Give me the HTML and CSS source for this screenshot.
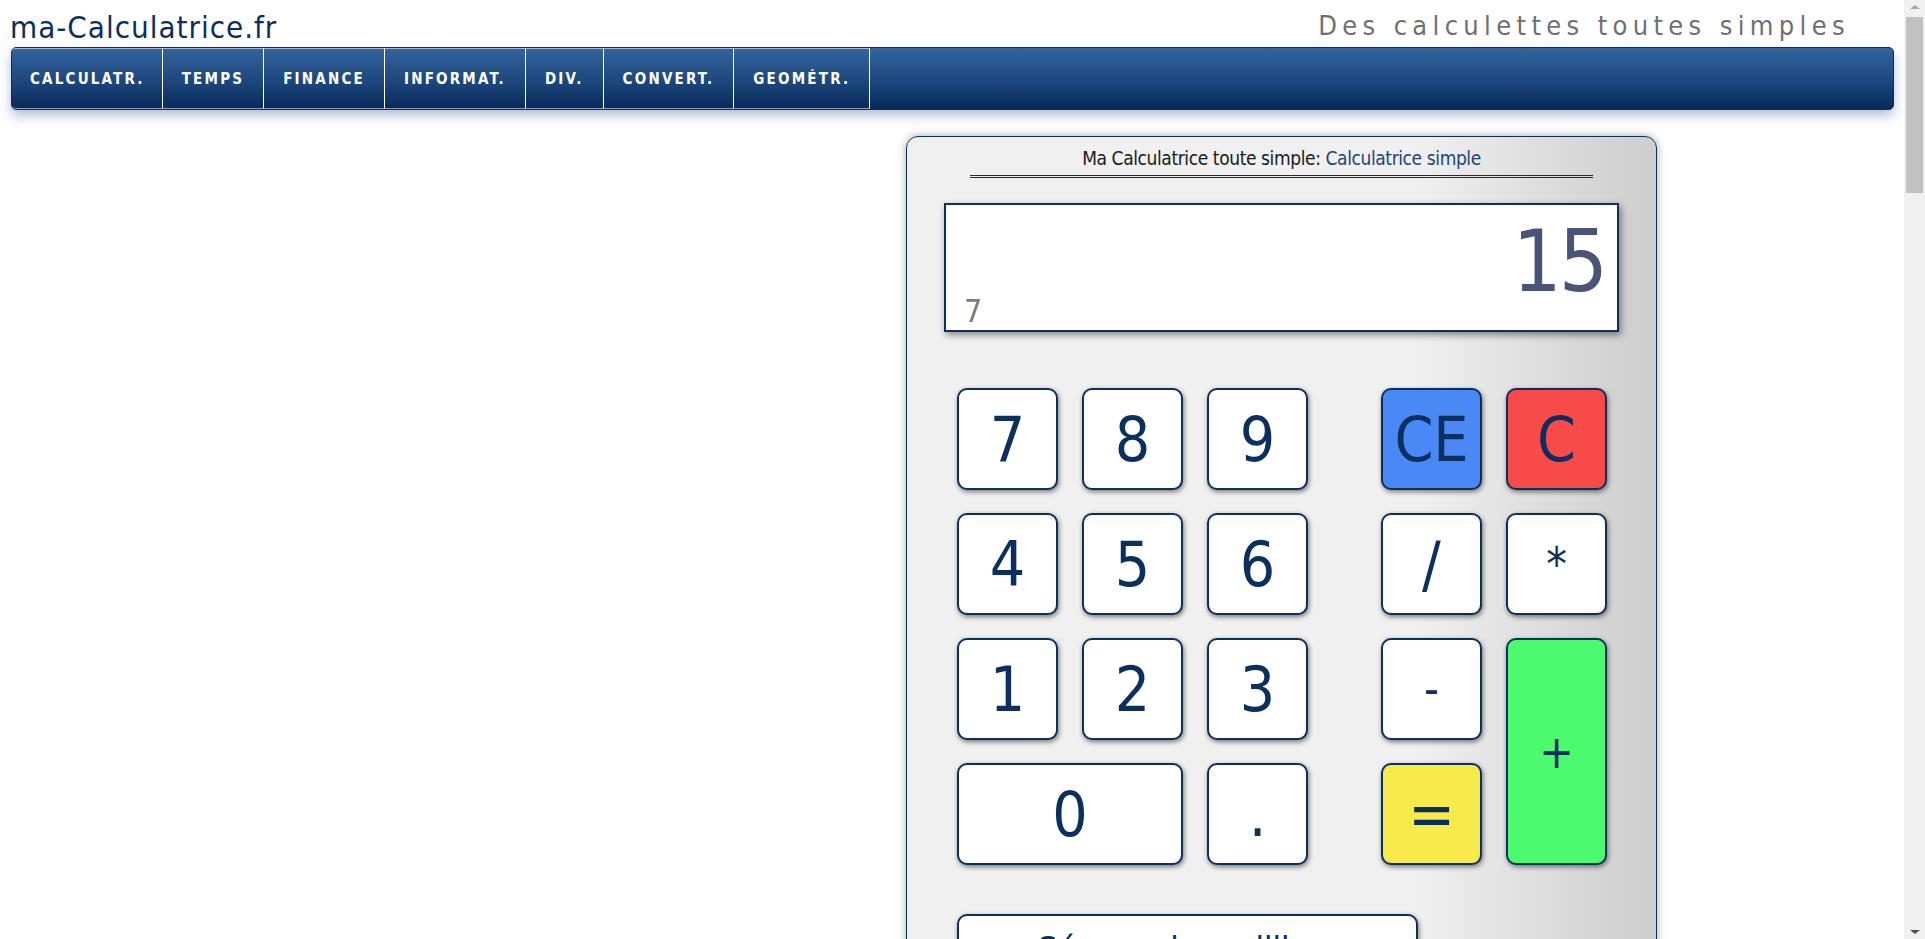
FILE: index.html
```html
<!DOCTYPE html>
<html lang="fr">
<head>
<meta charset="utf-8">
<title>ma-Calculatrice.fr</title>
<link rel="stylesheet" href="styles.css">
</head>
<body>
<div class="page">
  <header class="top">
    <a class="logo" href="#">ma-Calculatrice.fr</a>
    <div class="tagline">Des calculettes toutes simples</div>
  </header>
  <nav class="menu">
    <ul class="menu-list">
      <li class="menu-item">CALCULATR.</li>
      <li class="menu-item">TEMPS</li>
      <li class="menu-item">FINANCE</li>
      <li class="menu-item">INFORMAT.</li>
      <li class="menu-item">DIV.</li>
      <li class="menu-item">CONVERT.</li>
      <li class="menu-item">GEOMÉTR.</li>
    </ul>
  </nav>
  <main class="main">
    <aside class="side"></aside>
    <section class="calc">
      <h1 class="calc-title">Ma Calculatrice toute simple: <span class="calc-sub">Calculatrice simple</span></h1>
      <div class="display">
        <div class="result">15</div>
        <div class="memo">7</div>
      </div>
      <div class="pad">
        <div class="nums">
          <button class="key">7</button>
          <button class="key">8</button>
          <button class="key">9</button>
          <button class="key">4</button>
          <button class="key">5</button>
          <button class="key">6</button>
          <button class="key">1</button>
          <button class="key">2</button>
          <button class="key">3</button>
          <button class="key key-zero">0</button>
          <button class="key">.</button>
        </div>
        <div class="ops">
          <button class="key key-ce">CE</button>
          <button class="key key-c">C</button>
          <button class="key">/</button>
          <button class="key key-op">*</button>
          <button class="key key-op">-</button>
          <button class="key key-op key-plus">+</button>
          <button class="key key-eq">=</button>
        </div>
      </div>
      <button class="key key-wide">Séparer les milliers</button>
    </section>
  </main>
</div>
<div class="scrollbar" aria-hidden="true">
  <span class="sb-up"></span>
  <span class="sb-thumb"></span>
  <span class="sb-down"></span>
</div>
</body>
</html>
```
FILE: styles.css
```css
html, body {
  margin: 0;
  padding: 0;
  background: #ffffff;
}
body {
  font-family: "Liberation Sans Narrow", "DejaVu Sans Condensed", "Liberation Sans", sans-serif;
  font-stretch: condensed;
  color: #0b2f5e;
}
.page {
  margin-right: 21px;
  padding: 0 10px 0 11px;
  min-height: 4800px;
}

/* scrollbar lookalike at the right edge of the window */
.scrollbar {
  position: fixed;
  top: 0;
  right: 0;
  width: 21px;
  height: 100vh;
  background: #f0f0f0;
}
.sb-up, .sb-down {
  position: absolute;
  left: 6px;
  width: 0;
  height: 0;
  border-left: 5px solid transparent;
  border-right: 5px solid transparent;
}
.sb-up {
  top: 5px;
  border-bottom: 4px solid #a8a8a8;
}
.sb-down {
  bottom: 5px;
  border-top: 4px solid #505050;
}
.sb-thumb {
  position: absolute;
  top: 17px;
  left: 2px;
  right: 2px;
  height: 176px;
  background: #c1c1c1;
}

.top {
  display: flex;
  justify-content: space-between;
  align-items: flex-end;
  height: 47px;
}
.logo {
  font-size: 31px;
  line-height: 34px;
  color: #0b2f5e;
  text-decoration: none;
  letter-spacing: 1px;
  margin-left: -1px;
  padding-bottom: 3px;
}
.tagline {
  font-size: 27px;
  line-height: 34px;
  color: #6f6f6f;
  letter-spacing: 5.35px;
  margin-right: 44px;
  padding-bottom: 4px;
}
.menu {
  height: 61px;
  border: 1px solid #1e2a38;
  border-radius: 5px;
  background: linear-gradient(to bottom, #34649d 0%, #1f4a80 50%, #072a5a 100%);
  box-shadow: 0 6px 12px rgba(40, 70, 150, 0.35);
}
.menu-list {
  display: flex;
  height: 100%;
  margin: 0;
  padding: 0;
  list-style: none;
}
.menu-item {
  display: flex;
  align-items: center;
  padding: 0 19px;
  border-right: 1px solid #ffffff;
  border-top: 1px solid rgba(255,255,255,0.55);
  border-bottom: 1px solid rgba(255,255,255,0.55);
  color: #ffffff;
  font-weight: bold;
  font-size: 15px;
  letter-spacing: 2.2px;
}
.menu-item:first-child {
  padding: 0 17px 0 18px;
  border-top-left-radius: 4px;
  border-bottom-left-radius: 4px;
}
.main {
  display: flex;
  padding-top: 26px;
}
.side {
  flex: 0 0 895px;
}
.calc {
  width: 749px;
  height: 900px;
  border: 1px solid #0a3060;
  border-radius: 12px;
  background: linear-gradient(to right, #f0f0f0 0%, #f0f0f0 68%, #cdcdcd 100%);
  box-shadow: 0 0 8px rgba(0, 0, 0, 0.35);
}
.calc-title {
  margin: 8px 63px 0;
  padding-bottom: 4px;
  border-bottom: 3px double #0a3060;
  text-align: center;
  font-weight: normal;
  font-size: 19px;
  line-height: 26px;
  letter-spacing: -0.4px;
  color: #1a1a1a;
}
.calc-sub {
  color: #1c4478;
}
.display {
  position: relative;
  height: 125px;
  margin: 25px 37px 0;
  border: 2px solid #0a3060;
  background: #ffffff;
  box-shadow: 2px 3px 7px rgba(0, 0, 0, 0.45);
}
.result {
  text-align: right;
  padding-right: 12px;
  font-size: 86px;
  line-height: 86px;
  margin-top: 13px;
  letter-spacing: -3px;
  color: #4a5478;
}
.memo {
  position: absolute;
  left: 18px;
  bottom: 2px;
  font-size: 32px;
  line-height: 34px;
  color: #7c7c7c;
}
.pad {
  display: flex;
  gap: 73px;
  margin: 56px 0 0 50px;
}
.nums, .ops {
  display: grid;
  grid-auto-rows: 102px;
  gap: 23px 24px;
}
.nums {
  grid-template-columns: repeat(3, 101px);
}
.ops {
  grid-template-columns: repeat(2, 101px);
}
.key {
  margin: 0;
  padding: 0;
  border: 2px solid #0a3060;
  border-radius: 10px;
  background: #ffffff;
  box-shadow: 1px 2px 5px rgba(0, 0, 0, 0.5);
  font-family: inherit;
  font-stretch: condensed;
  font-size: 62px;
  color: #0b2f5e;
  cursor: pointer;
}
.key-op {
  font-size: 46px;
}
.key-zero {
  grid-column: span 2;
}
.key-ce {
  background: #4a89f5;
}
.key-c {
  background: #f94a4a;
}
.key-plus {
  grid-row: span 2;
  background: #4cfa70;
}
.key-eq {
  background: #f8ea4a;
}
.key-wide {
  display: block;
  width: 461px;
  height: 100px;
  margin: 49px 0 0 50px;
  padding: 0 0 30px;
  font-size: 36px;
  letter-spacing: -0.5px;
  white-space: nowrap;
}
```
